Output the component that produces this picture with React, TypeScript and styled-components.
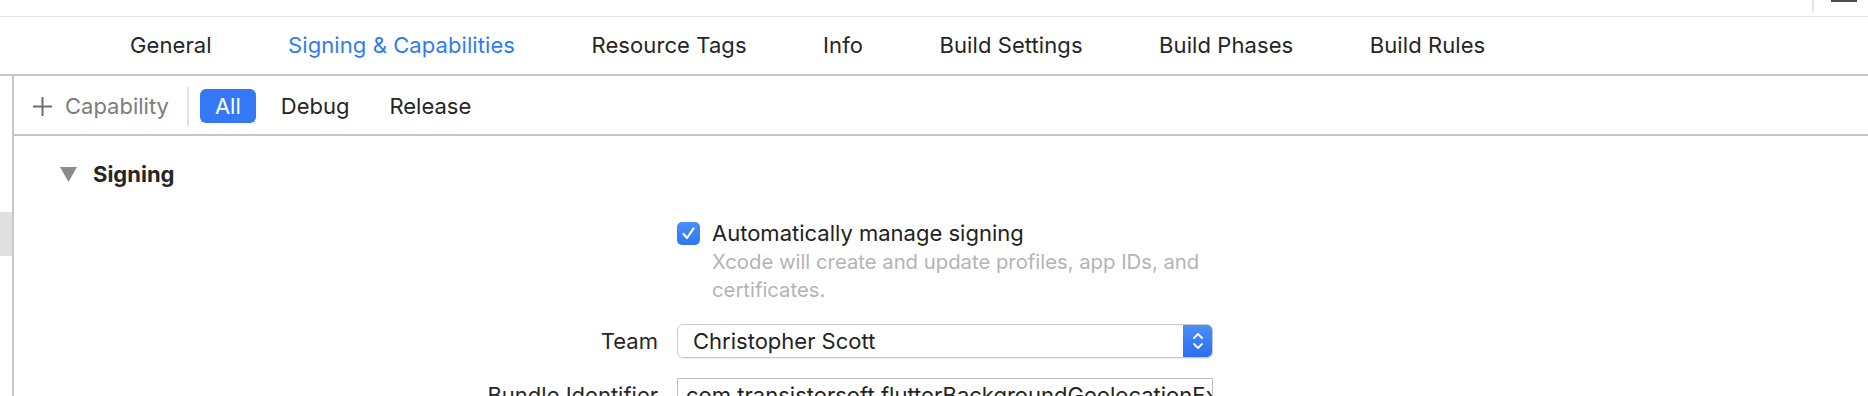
import React from "react";
import styled, { createGlobalStyle } from "styled-components";

const Global = createGlobalStyle`
  html, body { margin: 0; padding: 0; background: #ffffff; }
  body {
    font-family: Inter, "Noto Sans", sans-serif;
    color: #242424;
    -webkit-font-smoothing: antialiased;
  }
  #root { width: 1868px; height: 396px; overflow: hidden; }
`;

const Page = styled.div`
  width: 1868px;
  height: 396px;
  display: flex;
  flex-direction: column;
  overflow: hidden;
  background: #fff;
`;

const TopStrip = styled.div`
  height: 16px;
  flex-shrink: 0;
  border-bottom: 1px solid #e3e3e3;
  display: flex;
  justify-content: flex-end;
  align-items: flex-start;
  gap: 17px;
  padding-right: 11px;
`;

const StripDivider = styled.div`
  width: 2px;
  height: 12px;
  background: #e4e4e4;
`;

const StripButtonEdge = styled.div`
  width: 26px;
  height: 2px;
  background: #4f4f4f;
`;

const TabBar = styled.nav`
  height: 59px;
  flex-shrink: 0;
  border-bottom: 2px solid #c6c6c6;
  display: flex;
  align-items: center;
  gap: 76.5px;
  padding-left: 130px;
  padding-bottom: 1px;
  box-sizing: border-box;
`;

const Tab = styled.span<{ $active?: boolean }>`
  font-size: 22px;
  line-height: 28px;
  letter-spacing: 0.08px;
  color: ${(p) => (p.$active ? "#2f7bf5" : "#252525")};
  white-space: nowrap;
`;

const Body = styled.div`
  flex: 1;
  display: flex;
  min-height: 0;
`;

const Sidebar = styled.div`
  width: 12px;
  flex-shrink: 0;
  display: flex;
  flex-direction: column;
`;

const SidebarThumb = styled.div`
  margin-top: 136px;
  height: 44px;
  background: #e0e0e0;
`;

const SideDivider = styled.div`
  width: 2px;
  flex-shrink: 0;
  background: #c8c8c8;
`;

const Main = styled.div`
  flex: 1;
  display: flex;
  flex-direction: column;
  min-width: 0;
`;

const Toolbar = styled.div`
  height: 60px;
  box-sizing: border-box;
  flex-shrink: 0;
  border-bottom: 2px solid #c6c6c6;
  display: flex;
  align-items: center;
  padding-left: 18px;
  padding-top: 2px;
`;

const AddButton = styled.div`
  display: flex;
  align-items: center;
  gap: 12px;
  font-size: 22px;
  color: #7d7d7d;
`;

const ToolbarSeparator = styled.div`
  width: 2px;
  height: 39px;
  background: #e2e2e2;
  margin: 0 11px 0 18px;
`;

const FilterGroup = styled.div`
  display: flex;
  align-items: center;
  gap: 10px;
`;

const FilterPill = styled.span<{ $active?: boolean }>`
  height: 34px;
  display: flex;
  align-items: center;
  padding: 0 15px;
  border-radius: 6px;
  font-size: 22px;
  background: ${(p) => (p.$active ? "#3478f6" : "transparent")};
  color: ${(p) => (p.$active ? "#ffffff" : "#252525")};
`;

const Content = styled.div`
  display: flex;
  flex-direction: column;
`;

const SectionHeader = styled.div`
  height: 30px;
  margin-top: 23px;
  padding-left: 46px;
  display: flex;
  align-items: center;
  gap: 16px;
  font-size: 22px;
  font-weight: 700;
  color: #262626;
`;

const Form = styled.div`
  margin-top: 33px;
  display: grid;
  grid-template-columns: 644px 536px;
  column-gap: 19px;
  row-gap: 20px;
  align-items: center;
`;

const Label = styled.div`
  text-align: right;
  font-size: 22px;
  color: #262626;
  white-space: nowrap;
`;

const CheckboxField = styled.div`
  display: flex;
  align-items: flex-start;
  gap: 12px;
`;

const Checkbox = styled.span`
  width: 23px;
  height: 23px;
  border-radius: 5px;
  background: linear-gradient(#4a8ef8, #2f76f3);
  display: flex;
  align-items: center;
  justify-content: center;
  flex-shrink: 0;
`;

const CheckboxText = styled.div`
  display: flex;
  flex-direction: column;
`;

const CheckboxLabel = styled.div`
  font-size: 22px;
  line-height: 23px;
  color: #222;
`;

const Description = styled.div`
  margin-top: 3px;
  font-size: 20.3px;
  line-height: 28px;
  color: #b4b4b4;
  width: 500px;
`;

const Select = styled.div`
  height: 34px;
  box-sizing: border-box;
  border: 1px solid #cacaca;
  border-radius: 6px;
  box-shadow: 0 1px 1px rgba(0, 0, 0, 0.08);
  display: flex;
  overflow: hidden;
`;

const SelectValue = styled.div`
  flex: 1;
  display: flex;
  align-items: center;
  padding-left: 15px;
  font-size: 22px;
  color: #232323;
`;

const Stepper = styled.div`
  width: 29px;
  background: linear-gradient(#4b90f9, #2a6cf3);
  display: flex;
  align-items: center;
  justify-content: center;
`;

const TextInput = styled.div`
  height: 34px;
  box-sizing: border-box;
  border: 1px solid #bfbfbf;
  display: flex;
  align-items: center;
  padding-left: 8px;
  font-size: 22px;
  color: #232323;
  white-space: nowrap;
  overflow: hidden;
`;

const tabs = [
  "General",
  "Signing & Capabilities",
  "Resource Tags",
  "Info",
  "Build Settings",
  "Build Phases",
  "Build Rules",
];

export default function App() {
  return (
    <>
      <Global />
      <Page>
        <TopStrip>
          <StripDivider />
          <StripButtonEdge />
        </TopStrip>
        <TabBar>
          {tabs.map((t) => (
            <Tab key={t} $active={t === "Signing & Capabilities"}>
              {t}
            </Tab>
          ))}
        </TabBar>
        <Body>
          <Sidebar>
            <SidebarThumb />
          </Sidebar>
          <SideDivider />
          <Main>
            <Toolbar>
              <AddButton>
                <svg width="21" height="21" viewBox="0 0 21 21">
                  <path d="M10.5 1v19M1 10.5h19" stroke="#6f6f6f" strokeWidth="2" fill="none" />
                </svg>
                Capability
              </AddButton>
              <ToolbarSeparator />
              <FilterGroup>
                <FilterPill $active>All</FilterPill>
                <FilterPill>Debug</FilterPill>
                <FilterPill>Release</FilterPill>
              </FilterGroup>
            </Toolbar>
            <Content>
              <SectionHeader>
                <svg width="17" height="15" viewBox="0 0 17 15">
                  <polygon points="0,0 17,0 8.5,15" fill="#8c8c8c" />
                </svg>
                Signing
              </SectionHeader>
              <Form>
                <div />
                <CheckboxField>
                  <Checkbox>
                    <svg width="15" height="15" viewBox="0 0 15 15">
                      <path d="M2.5 8 L6 12 L12.5 2.5" stroke="#fff" strokeWidth="2.2" fill="none" strokeLinecap="round" strokeLinejoin="round" />
                    </svg>
                  </Checkbox>
                  <CheckboxText>
                    <CheckboxLabel>Automatically manage signing</CheckboxLabel>
                    <Description>
                      Xcode will create and update profiles, app IDs, and certificates.
                    </Description>
                  </CheckboxText>
                </CheckboxField>
                <Label>Team</Label>
                <Select>
                  <SelectValue>Christopher Scott</SelectValue>
                  <Stepper>
                    <svg width="12" height="20" viewBox="0 0 12 20">
                      <path d="M2 7 L6 3 L10 7 M2 13 L6 17 L10 13" stroke="#fff" strokeWidth="1.8" fill="none" strokeLinecap="round" strokeLinejoin="round" />
                    </svg>
                  </Stepper>
                </Select>
                <Label>Bundle Identifier</Label>
                <TextInput>com.transistorsoft.flutterBackgroundGeolocationExample</TextInput>
              </Form>
            </Content>
          </Main>
        </Body>
      </Page>
    </>
  );
}
